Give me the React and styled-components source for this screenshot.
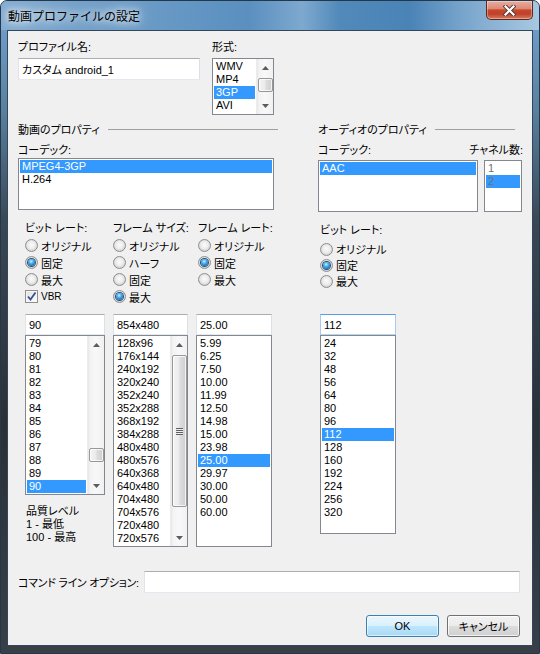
import React from 'react';
import styled, { createGlobalStyle, css } from 'styled-components';

const bitRates = ['79', '80', '81', '82', '83', '84', '85', '86', '87', '88', '89', '90'];
const frameSizes = [
  '128x96', '176x144', '240x192', '320x240', '352x240', '352x288', '368x192', '384x288',
  '480x480', '480x576', '640x368', '640x480', '704x480', '704x576', '720x480', '720x576',
];
const frameRates = [
  '5.99', '6.25', '7.50', '10.00', '11.99', '12.50', '14.98', '15.00',
  '23.98', '25.00', '29.97', '30.00', '50.00', '60.00',
];
const audioRates = ['24', '32', '48', '56', '64', '80', '96', '112', '128', '160', '192', '224', '256', '320'];

const GlobalStyle = createGlobalStyle`
  html, body {
    margin: 0;
    padding: 0;
    background: #fff;
  }
  body {
    width: 540px;
    height: 654px;
    overflow: hidden;
    font-family: "Liberation Sans", "Noto Sans CJK JP", sans-serif;
    font-size: 11px;
    font-feature-settings: "palt";
    color: #000;
  }
  * {
    box-sizing: border-box;
  }
`;

function ArrowGlyph({ down }) {
  return (
    <svg width="7" height="4" viewBox="0 0 7 4">
      <path d={down ? 'M0 0 H7 L3.5 4 Z' : 'M0 4 H7 L3.5 0 Z'} fill="#5c5c5c" />
    </svg>
  );
}

function ScrollBar({ offset, size }) {
  return (
    <StyledScrollBar>
      <StyledArrowButton>
        <ArrowGlyph />
      </StyledArrowButton>
      <StyledTrack>
        <StyledThumb $offset={offset} $size={size}>
          {size > 30 && <StyledGrip />}
        </StyledThumb>
      </StyledTrack>
      <StyledArrowButton>
        <ArrowGlyph down />
      </StyledArrowButton>
    </StyledScrollBar>
  );
}

function ListBox({ items, selected, width, height, disabled, scroll }) {
  return (
    <StyledListFrame $w={width} $h={height}>
      <StyledListItems>
        {items.map((item) => (
          <StyledListItem key={item} $selected={item === selected} $disabled={disabled}>
            {item}
          </StyledListItem>
        ))}
      </StyledListItems>
      {scroll && <ScrollBar offset={scroll.offset} size={scroll.size} />}
    </StyledListFrame>
  );
}

function Radio({ checked, pitch = 17, children }) {
  return (
    <StyledRadioRow $h={pitch}>
      <StyledRadioMark $checked={checked} />
      <span>{children}</span>
    </StyledRadioRow>
  );
}

function CheckBox({ checked, children }) {
  return (
    <StyledRadioRow $h={17}>
      <StyledCheckMark>
        {checked && (
          <svg width="11" height="11" viewBox="0 0 11 11">
            <path d="M2 5.5 L4.5 8.5 L9.5 1.5" fill="none" stroke="#3b4f8e" strokeWidth="1.8" />
          </svg>
        )}
      </StyledCheckMark>
      <StyledSmallText>{children}</StyledSmallText>
    </StyledRadioRow>
  );
}

function SectionHeader({ children, tail }) {
  return (
    <StyledSectionHeader>
      <span>{children}</span>
      <StyledRule $tail={tail} />
    </StyledSectionHeader>
  );
}

export default function App() {
  return (
    <>
      <GlobalStyle />
      <StyledWindow>
        <StyledTitleBar>
          <StyledTitle>動画プロファイルの設定</StyledTitle>
          <StyledCloseButton>
            <svg width="13" height="11" viewBox="0 0 13 11">
              <path d="M2.5 1.5 L10.5 9.5 M10.5 1.5 L2.5 9.5" stroke="#4a3a36" strokeWidth="4" strokeLinecap="square" />
              <path d="M2.5 1.5 L10.5 9.5 M10.5 1.5 L2.5 9.5" stroke="#fff" strokeWidth="2.2" strokeLinecap="square" />
            </svg>
          </StyledCloseButton>
        </StyledTitleBar>

        <StyledClient>
          <StyledTopRow>
            <StyledField>
              <StyledLabel>プロファイル名:</StyledLabel>
              <StyledTextBox $w={182} $h={22}>カスタム android_1</StyledTextBox>
            </StyledField>
            <StyledField>
              <StyledLabel>形式:</StyledLabel>
              <ListBox
                items={['WMV', 'MP4', '3GP', 'AVI']}
                selected="3GP"
                width={62}
                height={57}
                scroll={{ offset: 2, size: 14 }}
              />
            </StyledField>
          </StyledTopRow>

          <StyledProps>
            <SectionHeader tail={0}>動画のプロパティ</SectionHeader>
            <SectionHeader tail={8}>オーディオのプロパティ</SectionHeader>

            <StyledCodecBlock>
              <StyledLabel>コーデック:</StyledLabel>
              <StyledCodecList>
                <ListBox items={['MPEG4-3GP', 'H.264']} selected="MPEG4-3GP" width={256} height={52} />
              </StyledCodecList>
            </StyledCodecBlock>

            <StyledCodecBlock>
              <StyledLabelRow>
                <StyledLabel>コーデック:</StyledLabel>
                <StyledLabel>チャネル数:</StyledLabel>
              </StyledLabelRow>
              <StyledAudioLists>
                <ListBox items={['AAC']} selected="AAC" width={160} height={52} />
                <ListBox items={['1', '2']} selected="2" width={38} height={52} disabled />
              </StyledAudioLists>
            </StyledCodecBlock>

            <StyledRateGrid>
              <StyledRadioGroup>
                <StyledGroupLabel>ビット レート:</StyledGroupLabel>
                <Radio>オリジナル</Radio>
                <Radio checked>固定</Radio>
                <Radio>最大</Radio>
                <CheckBox checked>VBR</CheckBox>
              </StyledRadioGroup>
              <StyledRadioGroup>
                <StyledGroupLabel>フレーム サイズ:</StyledGroupLabel>
                <Radio>オリジナル</Radio>
                <Radio>ハーフ</Radio>
                <Radio>固定</Radio>
                <Radio checked>最大</Radio>
              </StyledRadioGroup>
              <StyledRadioGroup $shift={2}>
                <StyledGroupLabel>フレーム レート:</StyledGroupLabel>
                <Radio>オリジナル</Radio>
                <Radio checked>固定</Radio>
                <Radio>最大</Radio>
              </StyledRadioGroup>
            </StyledRateGrid>

            <StyledAudioRate>
              <StyledGroupLabel $gap={4}>ビット レート:</StyledGroupLabel>
              <Radio pitch={16}>オリジナル</Radio>
              <Radio pitch={16} checked>固定</Radio>
              <Radio pitch={16}>最大</Radio>
            </StyledAudioRate>

            <StyledRateGrid $lists>
              <StyledListColumn>
                <StyledTextBox $h={21}>90</StyledTextBox>
                <ListBox items={bitRates} selected="90" width={80} height={160} scroll={{ offset: 95, size: 14 }} />
                <StyledQuality>
                  <div>品質レベル</div>
                  <div>1 - 最低</div>
                  <div>100 - 最高</div>
                </StyledQuality>
              </StyledListColumn>
              <StyledListColumn>
                <StyledTextBox $h={21}>854x480</StyledTextBox>
                <ListBox items={frameSizes} width={75} height={212} scroll={{ offset: 2, size: 152 }} />
              </StyledListColumn>
              <StyledListColumn>
                <StyledTextBox $h={21}>25.00</StyledTextBox>
                <ListBox items={frameRates} selected="25.00" width={76} height={212} />
              </StyledListColumn>
            </StyledRateGrid>

            <StyledAudioListColumn>
              <StyledTextBox $h={21} $focus>112</StyledTextBox>
              <ListBox items={audioRates} selected="112" width={76} height={199} />
            </StyledAudioListColumn>
          </StyledProps>

          <StyledCommandRow>
            <StyledCommandLabel>コマンド ライン オプション:</StyledCommandLabel>
            <StyledTextBox $h={22} $grow />
          </StyledCommandRow>

          <StyledButtonRow>
            <StyledButton $default>OK</StyledButton>
            <StyledButton>キャンセル</StyledButton>
          </StyledButtonRow>
        </StyledClient>
      </StyledWindow>
    </>
  );
}

const StyledWindow = styled.div`
  width: 540px;
  height: 654px;
  display: flex;
  flex-direction: column;
  padding: 0 6px 7px;
  border: 1px solid #24384c;
  border-radius: 7px 7px 0 0;
  overflow: hidden;
  background: linear-gradient(180deg, #79a6cf 0, #6d9bc6 30px, #58809f 110px, #3a4754 220px, #2b3036 420px, #383f47 100%);
`;
const StyledTitleBar = styled.div`
  height: 29px;
  margin: 0 -6px;
  padding: 0 6px 0 7px;
  display: flex;
  align-items: flex-start;
  background: linear-gradient(90deg, #83acd1 0%, #74a1ca 14%, #6899c5 30%, #5a8fbf 46%, #7ea9cf 56%, #5189ba 63%, #4a83b6 76%, #79a5cc 86%, #a8c8e1 100%);
`;
const StyledTitle = styled.div`
  margin-top: 7px;
  font-family: "Noto Sans CJK JP", sans-serif;
  font-feature-settings: normal;
  font-size: 12px;
  line-height: 15px;
  color: #000;
  text-shadow: 0 0 6px rgba(255, 255, 255, 0.95), 0 0 12px rgba(255, 255, 255, 0.8), 0 0 18px rgba(255, 255, 255, 0.6);
`;
const StyledCloseButton = styled.div`
  width: 47px;
  height: 19px;
  margin-left: auto;
  display: flex;
  align-items: center;
  justify-content: center;
  border: 1px solid #5b2a1f;
  border-top: none;
  border-radius: 0 0 5px 5px;
  background: linear-gradient(180deg, #e9ad9e 0%, #dc8a76 42%, #c7482c 50%, #c0402a 72%, #da7b60 100%);
  box-shadow: inset 0 0 0 1px rgba(255, 255, 255, 0.35);
`;
const StyledClient = styled.div`
  flex: 1;
  display: flex;
  flex-direction: column;
  padding: 10px 9px 0 10px;
  background: #f0f0f0;
  border: 1px solid #33475c;
`;
const StyledTopRow = styled.div`
  display: flex;
  gap: 12px;
`;
const StyledField = styled.div`
  display: flex;
  flex-direction: column;
  gap: 4px;
`;
const StyledLabel = styled.div`
  font-size: 11px;
  line-height: 13px;
  white-space: nowrap;
`;
const StyledLabelRow = styled.div`
  display: flex;
  justify-content: space-between;
`;
const StyledTextBox = styled.div`
  width: ${(p) => (p.$w ? `${p.$w}px` : '100%')};
  height: ${(p) => p.$h}px;
  flex: ${(p) => (p.$grow ? 1 : 'none')};
  padding: 0 3px;
  display: flex;
  align-items: center;
  font-size: 11px;
  background: #fff;
  border: 1px solid;
  border-color: #abadb3 #dbdfe6 #e3e9ef #e2e3ea;
  ${(p) => p.$focus && css`
    border-color: #569de5 #a7cbec #b6d5f0 #a7cbec;
  `}
`;
const StyledListFrame = styled.div`
  width: ${(p) => p.$w}px;
  height: ${(p) => p.$h}px;
  flex: none;
  display: flex;
  background: #fff;
  border: 1px solid #828790;
`;
const StyledListItems = styled.div`
  flex: 1;
  min-width: 0;
  padding: 1px;
  overflow: hidden;
`;
const StyledListItem = styled.div`
  height: 13px;
  line-height: 13px;
  padding: 0 2px;
  white-space: nowrap;
  font-size: 11px;
  color: ${(p) => (p.$disabled ? '#707070' : p.$selected ? '#fff' : '#000')};
  background: ${(p) => (p.$selected ? '#3399ff' : 'transparent')};
`;
const StyledScrollBar = styled.div`
  width: 17px;
  flex: none;
  display: flex;
  flex-direction: column;
  background: linear-gradient(90deg, #e6e6e6 0, #f3f3f3 2px, #f8f8f8 50%, #f1f1f1 100%);
  border-left: 1px solid #ececec;
`;
const StyledArrowButton = styled.div`
  height: 17px;
  flex: none;
  display: flex;
  align-items: center;
  justify-content: center;
`;
const StyledTrack = styled.div`
  flex: 1;
  display: flex;
  flex-direction: column;
`;
const StyledThumb = styled.div`
  margin: ${(p) => p.$offset}px 0 0 1px;
  width: 15px;
  height: ${(p) => p.$size}px;
  flex: none;
  display: flex;
  align-items: center;
  justify-content: center;
  border: 1px solid #989898;
  border-radius: 2px;
  background: linear-gradient(90deg, #f4f4f4 0%, #eaeaea 45%, #dcdcdc 55%, #cfcfcf 100%);
  box-shadow: inset 0 0 0 1px rgba(255, 255, 255, 0.75);
`;
const StyledGrip = styled.div`
  width: 7px;
  height: 7px;
  background: repeating-linear-gradient(180deg, #606060 0, #606060 1px, #eeeeee 1px, #eeeeee 2px);
`;
const StyledProps = styled.div`
  display: grid;
  grid-template-columns: 260px 205px;
  column-gap: 40px;
  margin-top: 7px;
`;
const StyledSectionHeader = styled.div`
  display: flex;
  align-items: center;
  gap: 8px;
  height: 14px;
  font-size: 11px;
  white-space: nowrap;
`;
const StyledRule = styled.div`
  flex: 1;
  height: 1px;
  margin-right: ${(p) => p.$tail}px;
  background: #a0a0a0;
`;
const StyledCodecBlock = styled.div`
  margin-top: 8px;
  display: flex;
  flex-direction: column;
`;
const StyledCodecList = styled.div`
  margin-top: 1px;
`;
const StyledAudioLists = styled.div`
  margin-top: 3px;
  display: flex;
  gap: 6px;
`;
const StyledRateGrid = styled.div`
  display: grid;
  grid-template-columns: 80px 75px 76px;
  column-gap: 8px;
  margin-left: 7px;
  padding: ${(p) => (p.$lists ? '0' : '9px 0 9px')};
  align-items: start;
`;
const StyledRadioGroup = styled.div`
  display: flex;
  flex-direction: column;
  margin-left: ${(p) => p.$shift || 0}px;
`;
const StyledGroupLabel = styled.div`
  height: 14px;
  line-height: 14px;
  margin-bottom: ${(p) => p.$gap || 2}px;
  font-size: 11px;
  white-space: nowrap;
`;
const StyledRadioRow = styled.div`
  height: ${(p) => p.$h}px;
  display: flex;
  align-items: center;
  gap: 3px;
  font-size: 11px;
  white-space: nowrap;
`;
const StyledRadioMark = styled.span`
  width: 13px;
  height: 13px;
  flex: none;
  display: flex;
  align-items: center;
  justify-content: center;
  border-radius: 50%;
  border: 1px solid #8f8f8f;
  background: radial-gradient(circle at 50% 45%, #fbfbfb 0, #ececec 45%, #cdcdcd 80%, #b8b8b8 100%);
  ${(p) => p.$checked && css`
    &::after {
      content: '';
      width: 7px;
      height: 7px;
      border-radius: 50%;
      background: radial-gradient(circle at 45% 35%, #c8efff 0, #4fb1ea 35%, #1b6cb8 75%, #0f4a86 100%);
      box-shadow: 0 0 0 1px #21517f;
    }
  `}
`;
const StyledCheckMark = styled.span`
  width: 13px;
  height: 13px;
  flex: none;
  display: flex;
  align-items: center;
  justify-content: center;
  border: 1px solid #8f8f8f;
  background: linear-gradient(135deg, #dcdcdc 0%, #f4f4f4 60%, #fff 100%);
  box-shadow: inset 0 0 0 1px #f6f6f6;
`;
const StyledSmallText = styled.span`
  font-size: 10px;
`;
const StyledAudioRate = styled.div`
  display: flex;
  flex-direction: column;
  margin: 11px 0 0 2px;
`;
const StyledListColumn = styled.div`
  display: flex;
  flex-direction: column;
  align-items: flex-start;
`;
const StyledAudioListColumn = styled(StyledListColumn)`
  width: 76px;
  margin-left: 2px;
`;
const StyledQuality = styled.div`
  margin: 10px 0 0 1px;
  font-size: 11px;
  line-height: 13px;
  white-space: nowrap;
`;
const StyledCommandRow = styled.div`
  display: flex;
  align-items: center;
  gap: 5px;
  margin-top: 24px;
  padding-right: 3px;
`;
const StyledCommandLabel = styled.div`
  flex: none;
  font-size: 11px;
  letter-spacing: -0.3px;
  white-space: nowrap;
`;
const StyledButtonRow = styled.div`
  display: flex;
  justify-content: flex-end;
  gap: 8px;
  margin-top: 22px;
  padding-right: 3px;
`;
const StyledButton = styled.div`
  width: 73px;
  height: 22px;
  display: flex;
  align-items: center;
  justify-content: center;
  font-size: 11px;
  border: 1px solid #707070;
  border-radius: 3px;
  background: linear-gradient(180deg, #f2f2f2 0%, #ebebeb 50%, #dddddd 51%, #cfcfcf 100%);
  box-shadow: inset 0 0 0 1px rgba(255, 255, 255, 0.75);
  ${(p) => p.$default && css`
    border-color: #3c7fb1;
    background: linear-gradient(180deg, #eaf6fd 0%, #d9f0fc 50%, #bee6fd 51%, #a7d9f5 100%);
    box-shadow: inset 0 0 0 1px rgba(255, 255, 255, 0.6);
  `}
`;
